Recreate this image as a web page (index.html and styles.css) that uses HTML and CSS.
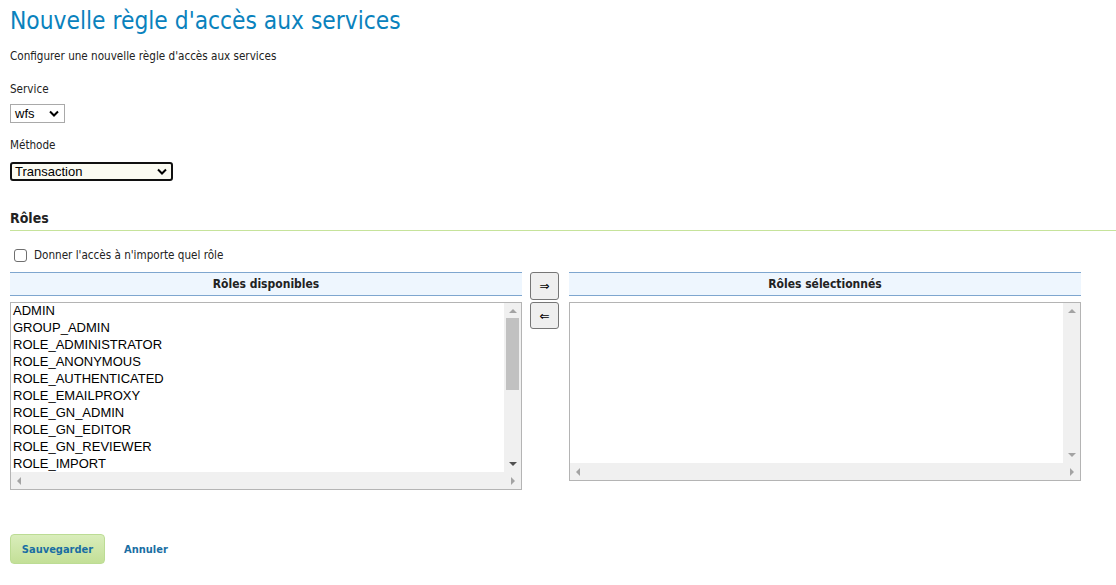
FILE: index.html
```html
<!DOCTYPE html>
<html lang="fr">
<head>
<meta charset="utf-8">
<title>Nouvelle règle d'accès aux services</title>
<link rel="stylesheet" href="styles.css">
</head>
<body>
<div class="page">
  <h1 class="title">Nouvelle règle d'accès aux services</h1>
  <p class="subtitle">Configurer une nouvelle règle d'accès aux services</p>

  <div class="field">
    <label class="label">Service</label>
    <div class="select select-service">
      <span class="select-text">wfs</span>
      <svg class="chev" width="10" height="7" viewBox="0 0 10 7"><path d="M1 1.5 L5 5.5 L9 1.5" fill="none" stroke="#000" stroke-width="2"/></svg>
    </div>
  </div>

  <div class="field field-method">
    <label class="label">Méthode</label>
    <div class="select select-method">
      <span class="select-text">Transaction</span>
      <svg class="chev" width="10" height="7" viewBox="0 0 10 7"><path d="M1 1.5 L5 5.5 L9 1.5" fill="none" stroke="#000" stroke-width="2"/></svg>
    </div>
  </div>

  <h3 class="section">Rôles</h3>

  <div class="check-row">
    <span class="checkbox"></span>
    <span class="check-label">Donner l'accès à n'importe quel rôle</span>
  </div>

  <div class="palette">
    <div class="col">
      <div class="col-header">Rôles disponibles</div>
      <div class="listbox listbox-left">
        <div class="list-items">
          <div class="item">ADMIN</div>
          <div class="item">GROUP_ADMIN</div>
          <div class="item">ROLE_ADMINISTRATOR</div>
          <div class="item">ROLE_ANONYMOUS</div>
          <div class="item">ROLE_AUTHENTICATED</div>
          <div class="item">ROLE_EMAILPROXY</div>
          <div class="item">ROLE_GN_ADMIN</div>
          <div class="item">ROLE_GN_EDITOR</div>
          <div class="item">ROLE_GN_REVIEWER</div>
          <div class="item">ROLE_IMPORT</div>
        </div>
        <div class="vscroll">
          <span class="arr arr-up"></span>
          <span class="thumb"></span>
          <span class="arr arr-down dark"></span>
        </div>
        <div class="hscroll">
          <span class="arr arr-left"></span>
          <span class="arr arr-right"></span>
        </div>
      </div>
    </div>

    <div class="buttons">
      <button class="move">⇒</button>
      <button class="move">⇐</button>
    </div>

    <div class="col">
      <div class="col-header">Rôles sélectionnés</div>
      <div class="listbox listbox-right">
        <div class="list-items"></div>
        <div class="vscroll">
          <span class="arr arr-up"></span>
          <span class="arr arr-down"></span>
        </div>
        <div class="hscroll">
          <span class="arr arr-left"></span>
          <span class="arr arr-right"></span>
        </div>
      </div>
    </div>
  </div>

  <div class="actions">
    <button class="save">Sauvegarder</button>
    <a class="cancel" href="#">Annuler</a>
  </div>
</div>
</body>
</html>
```

FILE: styles.css
```css
* { box-sizing: border-box; }

body {
  margin: 0;
  background: #fff;
  font-family: "DejaVu Sans Condensed", Tahoma, "DejaVu Sans", sans-serif;
  font-size: 11.6px;
  color: #222;
}

.page {
  padding: 0 0 0 10px;
}

.title {
  margin: 6px 0 0;
  font-size: 24.3px;
  line-height: 30px;
  font-weight: normal;
  color: #0a82bd;
}

.subtitle {
  margin: 12px 0 0;
  line-height: 16px;
}

.field {
  margin-top: 17px;
}

.field-method {
  margin-top: 14px;
}

.label {
  display: block;
  line-height: 16px;
}

.select {
  position: relative;
  display: flex;
  align-items: center;
  height: 19px;
  margin-top: 7px;
  font-family: "Liberation Sans", Arial, sans-serif;
  font-size: 13px;
  color: #000;
  background: #fff;
  border: 1px solid #a9a9a9;
}

.select-service {
  width: 55px;
  padding-left: 4px;
}

.select-method {
  width: 163px;
  margin-top: 9px;
  padding-left: 3px;
  border: 2px solid #101010;
  border-radius: 3px;
  background: #fbfbf2;
}

.chev {
  position: absolute;
  right: 5px;
  top: 5px;
}

.select-method .chev {
  top: 4px;
  right: 4px;
}

.section {
  margin: 28px 0 0;
  padding-bottom: 3px;
  font-size: 14px;
  line-height: 18px;
  font-weight: bold;
  color: #222;
  border-bottom: 1px solid #c6e39b;
}

.check-row {
  display: flex;
  align-items: center;
  height: 18px;
  margin-top: 15px;
}

.checkbox {
  width: 13px;
  height: 13px;
  margin-left: 4px;
  border: 1px solid #6f6f6f;
  border-radius: 3px;
  background: #fff;
}

.check-label {
  margin-left: 7px;
}

.palette {
  display: flex;
  align-items: flex-start;
  margin-top: 8px;
}

.col {
  width: 512px;
}

.col-header {
  height: 24px;
  line-height: 22px;
  text-align: center;
  font-size: 12px;
  font-weight: bold;
  background: #eef6fe;
  border-top: 1px solid #7ea6cf;
  border-bottom: 1px solid #7ea6cf;
}

.listbox {
  display: grid;
  grid-template-columns: 1fr 17px;
  grid-template-rows: 1fr 17px;
  margin-top: 6px;
  border: 1px solid #b4b4b4;
  background: #fff;
}

.listbox-left { height: 188px; }
.listbox-right { height: 179px; }

.list-items {
  padding: 0 0 0 2px;
  font-family: "Liberation Sans", Arial, sans-serif;
  font-size: 13px;
  color: #000;
  overflow: hidden;
}

.item {
  height: 17px;
  line-height: 15px;
}

.vscroll {
  display: flex;
  flex-direction: column;
  align-items: center;
  background: #f0f0f0;
}

.hscroll {
  grid-column: 1 / span 2;
  display: flex;
  align-items: center;
  justify-content: space-between;
  padding: 0 6px;
  background: #f0f0f0;
}

.thumb {
  display: block;
  width: 13px;
  height: 72px;
  margin-top: 5px;
  background: #c1c1c1;
}

.arr {
  display: block;
  width: 0;
  height: 0;
}

.arr-up {
  margin-top: 6px;
  border-left: 4px solid transparent;
  border-right: 4px solid transparent;
  border-bottom: 4px solid #a3a3a3;
}

.arr-down {
  margin-top: auto;
  margin-bottom: 6px;
  border-left: 4px solid transparent;
  border-right: 4px solid transparent;
  border-top: 4px solid #a3a3a3;
}

.arr-down.dark { border-top-color: #505050; }

.arr-left {
  border-top: 4px solid transparent;
  border-bottom: 4px solid transparent;
  border-right: 4px solid #a3a3a3;
}

.arr-right {
  border-top: 4px solid transparent;
  border-bottom: 4px solid transparent;
  border-left: 4px solid #a3a3a3;
}

.buttons {
  display: flex;
  flex-direction: column;
  gap: 2px;
  margin: 0 10px 0 8px;
}

.move {
  width: 29px;
  height: 28px;
  padding: 0;
  font-family: "DejaVu Sans", sans-serif;
  font-size: 12px;
  color: #000;
  background: #efefef;
  border: 1px solid #767676;
  border-radius: 3px;
}

.move + .move {
  height: 27px;
}

.actions {
  display: flex;
  align-items: center;
  margin-top: 44px;
}

.save {
  width: 95px;
  height: 30px;
  padding: 0;
  font-family: "DejaVu Sans Condensed", Tahoma, sans-serif;
  font-size: 11px;
  font-weight: bold;
  color: #1a6ea3;
  background: linear-gradient(#d9edbb, #c3df97);
  border: 1px solid #bcdc94;
  border-radius: 4px;
}

.cancel {
  margin-left: 19px;
  font-size: 11px;
  font-weight: bold;
  color: #1a6ea3;
  text-decoration: none;
}
```
